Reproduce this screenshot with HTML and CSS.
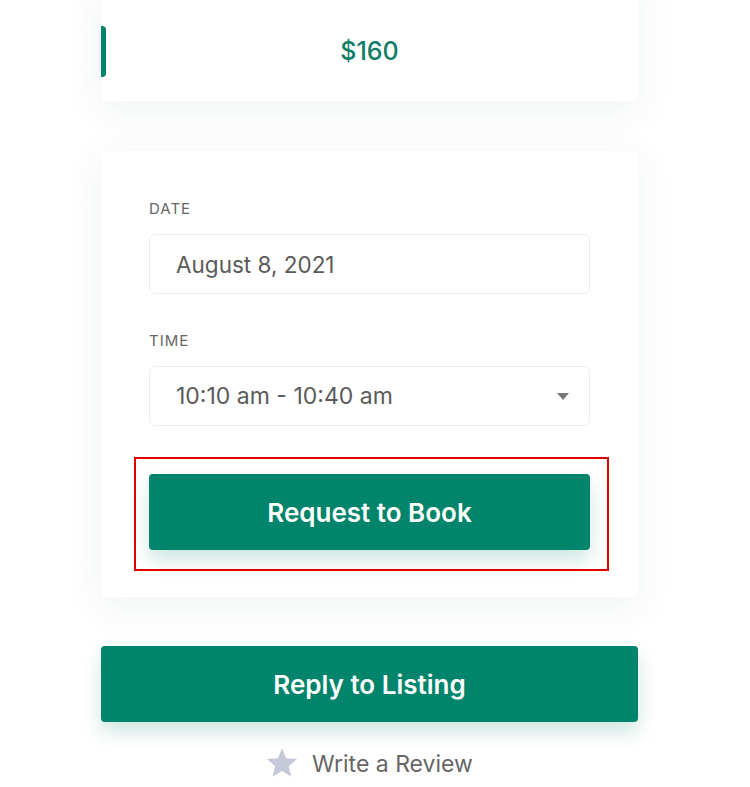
FILE: index.html
```html
<!DOCTYPE html>
<html lang="en">
<head>
  <meta charset="UTF-8">
  <title>Booking</title>
  <link rel="stylesheet" href="styles.css">
</head>
<body>
  <div class="sidebar">
    <div class="card price-card">
      <span class="price">$160</span>
    </div>

    <div class="card booking-card">
      <label class="field-label">Date</label>
      <div class="field">August 8, 2021</div>

      <label class="field-label">Time</label>
      <div class="field field-select">
        <span>10:10 am - 10:40 am</span>
        <span class="caret"></span>
      </div>

      <div class="highlight">
        <a class="btn" href="javascript:;">Request to Book</a>
      </div>
    </div>

    <a class="btn btn-wide" href="javascript:;">Reply to Listing</a>

    <a class="review" href="javascript:;">
      <svg width="32" height="31" viewBox="0 0 24 23"><path d="M12 0l3.1 7.6 8.2.6-6.3 5.3 2 8L12 17.2 4.9 21.5l2-8L.7 8.2l8.2-.6z" fill="#c6c9d8"/></svg>
      Write a Review
    </a>
  </div>
</body>
</html>
```

FILE: styles.css
```css
html,body {
  margin: 0;
  padding: 0;
}
body {
  background-color: #fff;
  color: #555;
  font-family: "Inter", "Liberation Sans", sans-serif;
}
.sidebar {
  width: 537px;
  margin: 0 0 0 101px;
  display: flex;
  flex-direction: column;
}
.card {
  background-color: #fff;
  border-radius: 4px;
  box-shadow: 0 8px 40px rgba(30, 50, 70, 0.07);
}
.price-card {
  height: 121px;
  margin-top: -20px;
  display: flex;
  align-items: center;
  justify-content: center;
  position: relative;
  padding-top: 20px;
  box-sizing: border-box;
}
.price-card::before {
  content: "";
  position: absolute;
  left: 0;
  top: 46px;
  width: 5px;
  height: 51px;
  background-color: #00846b;
  border-radius: 0 4px 4px 0;
}
.price {
  color: #107d68;
  font-size: 25px;
  font-weight: 500;
}
.booking-card {
  margin-top: 50px;
  padding: 50px 48px 47px;
  display: flex;
  flex-direction: column;
}
.field-label {
  display: block;
  font-size: 15px;
  letter-spacing: 1px;
  text-transform: uppercase;
  color: #666;
  line-height: 16px;
  margin-bottom: 17px;
}
.field {
  height: 58px;
  border: 1px solid #eceef0;
  border-radius: 6px;
  padding: 0 26px;
  display: flex;
  align-items: center;
  justify-content: space-between;
  font-size: 22.5px;
  color: #5a5a5a;
  margin-bottom: 39px;
}
.field-select {
  font-size: 23px;
}
.caret {
  width: 0;
  height: 0;
  border-left: 6px solid transparent;
  border-right: 6px solid transparent;
  border-top: 7px solid #777;
  margin-right: -6px;
}
.highlight {
  position: relative;
  margin-top: 9px;
}
.highlight::after {
  content: "";
  position: absolute;
  left: -15px;
  top: -17px;
  right: -19px;
  bottom: -21px;
  border: 2px solid #e00000;
}
.btn {
  display: flex;
  align-items: center;
  justify-content: center;
  height: 76px;
  background-color: #00846b;
  color: #fff;
  border-radius: 4px;
  font-size: 26px;
  font-weight: 600;
  text-decoration: none;
  box-shadow: 0 10px 20px rgba(0, 132, 107, 0.2);
}
.btn-wide {
  margin-top: 49px;
  font-size: 26px;
}
.review {
  align-self: center;
  display: flex;
  align-items: center;
  gap: 14px;
  margin-top: 26px;
  font-size: 23px;
  color: #666;
  text-decoration: none;
}
```
